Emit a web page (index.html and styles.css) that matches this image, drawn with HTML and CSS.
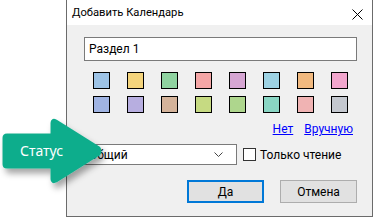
FILE: index.html
```html
<!DOCTYPE html>
<html lang="ru">
<head>
<meta charset="utf-8">
<link rel="stylesheet" href="styles.css">
</head>
<body>
<div class="dialog">
  <div class="titlebar">
    <span class="title">Добавить Календарь</span>
    <svg class="close" width="11" height="11" viewBox="0 0 11 11"><path d="M0.5 0.5 L10.5 10.5 M10.5 0.5 L0.5 10.5" stroke="#000" stroke-width="1" fill="none"/></svg>
  </div>
  <div class="content">
    <div class="name-input">Раздел 1</div>
    <div class="swatches">
      <span class="sw" style="background:#9dc3e6"></span>
      <span class="sw" style="background:#f4d47c"></span>
      <span class="sw" style="background:#8fd3a0"></span>
      <span class="sw" style="background:#f4a6a6"></span>
      <span class="sw" style="background:#d6a6d3"></span>
      <span class="sw" style="background:#9dd2e3"></span>
      <span class="sw" style="background:#f1b97f"></span>
      <span class="sw" style="background:#f2a6cd"></span>
      <span class="sw" style="background:#a0b4e3"></span>
      <span class="sw" style="background:#b7aee0"></span>
      <span class="sw" style="background:#d4b39a"></span>
      <span class="sw" style="background:#c6da82"></span>
      <span class="sw" style="background:#aed68d"></span>
      <span class="sw" style="background:#8ad6c4"></span>
      <span class="sw" style="background:#f0b3b3"></span>
      <span class="sw" style="background:#c4c8cf"></span>
    </div>
    <div class="links">
      <a class="link">Нет</a>
      <a class="link">Вручную</a>
    </div>
    <div class="status-row">
      <div class="combo">
        <span>Общий</span>
        <svg class="chev" width="9" height="5" viewBox="0 0 9 5"><path d="M0.5 0.5 L4.5 4.5 L8.5 0.5" stroke="#444" stroke-width="1" fill="none"/></svg>
      </div>
      <label class="check"><span class="box"></span><span>Только чтение</span></label>
    </div>
    <div class="buttons">
      <div class="btn btn-default">Да</div>
      <div class="btn">Отмена</div>
    </div>
  </div>
</div>
<svg class="callout" width="120" height="100" viewBox="0 0 120 100">
  <defs>
    <filter id="sh" x="-20%" y="-20%" width="150%" height="150%">
      <feDropShadow dx="3" dy="5" stdDeviation="3" flood-color="#000" flood-opacity="0.35"/>
    </filter>
  </defs>
  <path filter="url(#sh)" fill="#10ad8c" stroke="#10ad8c" stroke-width="3" stroke-linejoin="round"
    d="M7 25 L52 25 L52 13 Q52 9 56 11 L99 38 Q101 41 99 44 L56 71 Q52 73 52 69 L52 57 L7 57 Q4 57 4 54 L4 28 Q4 25 7 25 Z"/>
  <text x="20" y="46" class="callout-text">Статус</text>
</svg>
</body>
</html>
```
FILE: styles.css
```css
html, body {
  margin: 0;
  padding: 0;
  background: #ffffff;
}
body {
  width: 375px;
  height: 218px;
  overflow: hidden;
  position: relative;
  font-family: Roboto, "Noto Sans", sans-serif;
  font-size: 12px;
  color: #000;
}
.dialog {
  margin-left: 66px;
  width: 305px;
  height: 216px;
  border-left: 1px solid #6b6b6b;
  border-right: 1px solid #6b6b6b;
  border-bottom: 1px solid #6b6b6b;
  display: flex;
  flex-direction: column;
}
.titlebar {
  height: 25px;
  background: #fff;
  display: flex;
  align-items: center;
  justify-content: space-between;
  padding: 0 9px 0 5px;
}
.title {
  font-size: 11.2px;
  line-height: 16px;
  margin-top: 1px;
}
.close {
  display: block;
  margin-top: 3px;
}
.content {
  flex: 1;
  background: #f0f0f0;
  padding: 12px 15px 0 17px;
  display: flex;
  flex-direction: column;
}
.name-input {
  height: 22px;
  border: 1px solid #7a7a7a;
  background: #fff;
  display: flex;
  align-items: center;
  padding-left: 4px;
  line-height: 16px;
}
.swatches {
  margin-top: 11px;
  margin-left: 9px;
  display: grid;
  grid-template-columns: repeat(8, 17px);
  grid-auto-rows: 17px;
  column-gap: 17px;
  row-gap: 7px;
}
.sw {
  width: 15px;
  height: 15px;
  border: 1px solid #000;
  display: block;
}
.links {
  margin-top: 8px;
  display: flex;
  justify-content: flex-end;
  gap: 11px;
  padding-right: 4px;
  line-height: 16px;
}
.link {
  color: #0000ff;
  text-decoration: underline;
}
.status-row {
  margin-top: 7px;
  display: flex;
  align-items: center;
}
.combo {
  height: 19px;
  border: 1px solid #7a7a7a;
  background: #fff;
  display: flex;
  align-items: center;
  justify-content: space-between;
  padding: 0 13px 0 4px;
  box-sizing: content-box;
  width: 134px;
}
.chev {
  display: block;
}
.check {
  margin-left: 6px;
  display: flex;
  align-items: center;
  gap: 4px;
}
.box {
  width: 11px;
  height: 11px;
  border: 1px solid #333;
  background: #fff;
  display: block;
}
.buttons {
  margin-top: 15px;
  display: flex;
  justify-content: flex-end;
  gap: 16px;
}
.btn {
  width: 75px;
  height: 21px;
  border: 1px solid #adadad;
  background: #e1e1e1;
  display: flex;
  align-items: center;
  justify-content: center;
}
.btn-default {
  width: 73px;
  height: 19px;
  border: 2px solid #0078d7;
}
.callout {
  position: absolute;
  left: 0;
  top: 110px;
}
.callout-text {
  fill: #ffffff;
  font-family: "Noto Sans", sans-serif;
  font-size: 14px;
}
```
